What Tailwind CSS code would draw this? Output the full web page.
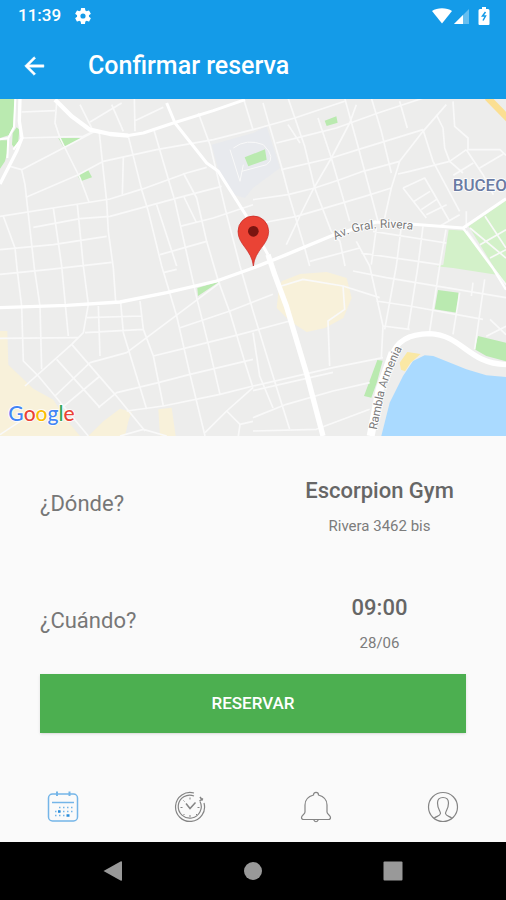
<!DOCTYPE html>
<html lang="es">
<head>
    <meta charset="UTF-8">
    <meta name="viewport" content="width=device-width, initial-scale=1.0">
    <title>Confirmar reserva</title>
    <script src="https://cdn.jsdelivr.net/npm/@tailwindcss/browser@4"></script>
</head>
<body class="min-h-screen flex flex-col bg-[#fafafa] font-[Roboto,sans-serif] text-[#666666]">

    <!-- Status bar + app bar -->
    <header class="bg-[#149be8] text-white">
        <div class="h-8 pl-[18px] pr-4 flex items-center justify-between">
            <div class="flex items-center gap-3">
                <span class="text-[17px] font-medium">11:39</span>
                <svg class="size-5" viewBox="0 0 24 24" fill="currentColor">
                    <path d="M19.14 12.94c.04-.3.06-.61.06-.94s-.02-.64-.07-.94l2.03-1.58a.49.49 0 0 0 .12-.61l-1.92-3.32a.49.49 0 0 0-.59-.22l-2.39.96a7 7 0 0 0-1.62-.94l-.36-2.54a.48.48 0 0 0-.48-.41h-3.84a.48.48 0 0 0-.47.41l-.36 2.54a7.3 7.3 0 0 0-1.62.94l-2.39-.96a.48.48 0 0 0-.59.22L2.74 8.87a.47.47 0 0 0 .12.61l2.03 1.58a6 6 0 0 0 0 1.88l-2.03 1.58a.49.49 0 0 0-.12.61l1.92 3.32c.12.22.37.29.59.22l2.39-.96c.5.38 1.03.7 1.62.94l.36 2.54c.05.24.24.41.48.41h3.84c.24 0 .44-.17.47-.41l.36-2.54a7 7 0 0 0 1.62-.94l2.39.96c.22.08.47 0 .59-.22l1.92-3.32a.47.47 0 0 0-.12-.61zM12 15.1a3.100 3.100 0 1 1 0-6.200 3.100 3.100 0 0 1 0 6.200"/>
                </svg>
            </div>
            <div class="flex items-center">
                <svg class="w-5 h-4" viewBox="0 0 20 16" fill="currentColor"><path d="M0 3C5-.8 15-.8 20 3L10 15.500z"/></svg>
                <svg class="ml-0.5 w-4 h-4" viewBox="0 0 16 16" fill="currentColor">
                    <path d="M0 16L15 1v15z" opacity=".35"/>
                    <path d="M0 16L9 7v9z"/>
                </svg>
                <svg class="ml-2 w-3 h-[18px]" viewBox="0 0 12 18">
                    <path d="M4 0h4v2h2q1.500 0 1.500 1.500V17q0 1-1 1H1.500q-1 0-1-1V3.500Q.5 2 2 2h2z" fill="currentColor"/>
                    <path d="M7.500 5L4.500 9H7.500L5 13.500" fill="none" stroke="#149be8" stroke-width="1.500"/>
                </svg>
            </div>
        </div>
        <div class="h-[67px] pl-5 flex items-center gap-10">
            <button type="button" aria-label="Volver">
                <svg class="size-7" viewBox="0 0 24 24" fill="currentColor" stroke="currentColor" stroke-width=".4"><path d="M20.500 11H7.830l5.590-5.590L12 4l-8 8 8 8 1.410-1.410L7.830 13H20.500z"/></svg>
            </button>
            <h1 class="text-[25px] font-medium">Confirmar reserva</h1>
        </div>
    </header>

    <!-- Map -->
    <svg class="block w-full h-[337px] bg-[#ededec]" viewBox="0 3 1518 1011" preserveAspectRatio="xMidYMid slice" role="img" aria-label="Mapa de Escorpion Gym">
        <!-- areas -->
        <path fill="#e8eaee" d="M635 140L759 105 800 85 840 210 759 270 735 300 700 290 655 215z"/>
        <g fill="#baeab0">
            <path d="M0 0H44L40 85 26 112 0 120zM0 127H21L25 150 15 190 0 212zM50 88L58 95 55 130 42 148 36 140 38 106z"/>
            <path d="M175 120L245 120 192 150zM232 232L264 215 276 238 242 250z"/>
            <path d="M734 178L795 154 800 185 745 205zM974 68L1009 55 1013 74 980 84z"/>
            <path d="M592 570L660 550 594 594zM108 916H140L125 934z"/>
            <path d="M1314 576L1376 584 1371 644 1304 634zM1434 714L1518 734V790L1459 774 1424 754zM1132 786L1148 788 1130 855 1114 899 1092 894z"/>
        </g>
        <g fill="#d3f1c9">
            <path d="M1346 395L1400 398 1490 530 1359 510 1310 505 1330 500z"/>
            <path d="M1406 385L1518 308V560L1480 505z"/>
        </g>
        <g fill="#f8f1da">
            <path d="M0 699H22L25 800 100 872 160 905 195 960 240 1014H0z"/>
            <path d="M265 1014L310 970 360 932 395 942 385 970 375 1014zM475 934L515 929 527 1014H480z"/>
            <path d="M845 550L900 528 980 522 1040 540 1055 600 1030 660 975 690 920 702 870 670 830 630 835 585z"/>
        </g>
        <!-- minor streets -->
        <g fill="none" stroke="#f9f9f9" stroke-width="5" stroke-linejoin="round">
            <path d="M65 42L165 38M65 120L250 115 290 95M170 15L165 75 180 120 240 240 268 315M30 205L65 215 75 260 85 350 103 510 120 624 125 814M65 215L180 155 285 100M240 20L280 100M270 72L365 15M335 20L370 100M403 0L405 100M405 68L490 28"/>
            <path d="M78 298L235 230 310 190 470 155 640 125 759 95 884 60 1034 10M298 105L308 200 320 310 325 400 340 510 347 610M385 115L425 275 445 340 485 504 530 654 570 829 615 1014M370 178L367 290M460 90L510 260 525 310 590 599 625 739 660 889"/>
            <path d="M0 355L235 318 330 303 430 272 560 225 620 208M10 355L45 450 52 520 65 624 70 789 115 834 265 1014M100 388L240 362 330 355 440 325 550 295 665 265M0 455L160 440 320 415M160 330L185 504 205 714M232 320L250 504 265 619 250 704 215 739 75 864M0 529L150 514 335 493M470 320L530 504"/>
            <path d="M550 225L590 300 620 430 655 549 690 644 735 794 759 869M552 297L590 375M540 385L640 360 759 320M480 470L620 430M595 45L630 140 680 350 720 504 759 639 819 834 869 994M730 0L759 95"/>
            <path d="M789 15L809 85 844 205 869 300 914 450 929 504M864 0L914 145 944 270 994 400 1020 430 1035 504M864 80L900 135M954 60L994 180 1029 300 1049 370M1034 0L1074 145 1109 275 1134 370M1114 0L1144 100 1174 225M1199 10L1222 90"/>
            <path d="M829 135L909 115 1009 90 1134 45 1270 0M844 215L994 180 1074 155 1269 95M759 305L864 290 944 270 1019 245 1089 220 1199 190M759 380L889 355 959 335 1094 295 1174 270M1069 20L1049 75 994 180 939 275 904 345 859 440M1339 20L1269 100 1199 190 1174 270 1154 360"/>
            <path d="M1309 50L1329 90 1334 150 1349 190M1359 10L1364 85 1404 120V155H1500L1518 172M1194 228L1229 220 1349 190 1399 155M1269 95L1299 190 1379 340M1349 190L1389 225M1399 155L1449 230 1480 290M1360 232L1420 195M1439 210L1510 168M1209 270L1274 240 1309 300 1349 370M1209 270L1279 360M1239 312L1290 280M1264 335L1309 305M1279 350L1340 320M1319 385L1379 350M1399 390V340"/>
            <path d="M929 490L1079 450M1069 430L1109 504 1149 684 1144 779M1129 390L1114 500M1204 385L1189 504 1154 694M1269 385L1254 504 1224 694M1119 400L1339 435M1084 465L1319 500M1338 395L1319 504 1289 699M1379 584L1359 709M1454 544L1424 754M1059 519L1159 539 1518 599M1129 609L1229 624 1449 664M1149 684L1229 694M1419 554L1414 594M1459 715L1518 685M1470 664L1518 710"/>
            <path d="M1410 390L1518 480M1440 440L1518 395M1470 480L1518 455M1455 355L1518 450M1400 398L1480 510 1518 560"/>
            <path d="M295 624L300 774M362 614L370 704 440 934M420 609L430 694 460 774 490 924M260 659L425 654M255 704L430 694M0 721L235 719M215 739L345 889 435 999M270 794L380 764 600 599 660 554M270 794L165 894M300 834L180 934M170 784L300 929M295 929L350 884 475 854 570 829 759 784M380 939L490 924 660 889 759 864M460 774L550 752 720 709 869 669M540 689L690 639 819 589M490 524L530 514M615 1004L680 939 759 869M680 939L720 979 715 1014M720 979L759 970M360 1014L430 994 500 1014M0 1010L60 970"/>
            <path d="M759 864L999 809 1149 779M759 878L999 823M759 959L859 919 999 879 1109 854M759 999L949 994 1109 934M759 704L779 834 819 930"/>
            <path d="M844 564L909 544 1029 564 1139 599M1029 564L1034 634 984 669 989 804"/>
            <path d="M690 155L720 250 730 200M700 150Q740 120 790 140Q830 180 800 200L725 220" stroke-width="3"/>
        </g>
        <!-- main roads -->
        <g fill="none" stroke="#ffffff" stroke-linejoin="round">
            <path stroke-width="10" d="M60 0L58 70 66 120 50 160 0 258"/>
            <path stroke-width="6" d="M46 0L42 88 25 120 0 124M25 120L22 180M66 120L40 155"/>
            <path stroke-width="13" d="M165 5L215 55 270 95 330 108 385 113"/>
            <path stroke-width="9" d="M380 113L430 105 520 75 640 38 735 5"/>
            <path stroke-width="9" d="M500 15L525 75 620 195 655 220 740 355 804 470"/>
            <path stroke-width="16" d="M804 470L824 530 859 624 919 824 969 1014"/>
            <path stroke-width="10" d="M0 629L200 622 360 612 500 584 650 549 759 510 859 470 999 412 1129 372"/>
            <path stroke-width="9" d="M1120 372L1229 378 1389 390 1518 302"/>
            <path stroke-width="7" d="M1389 390L1478 510 1518 575"/>
        </g>
        <!-- coast -->
        <path fill="#aadaff" d="M1144 1014L1169 914 1209 834 1239 789 1274 772 1300 774 1399 814 1459 832 1518 837V1014z"/>
        <path fill="#fae8a4" d="M1199 794L1222 762 1262 768 1232 794 1215 820 1203 815z"/>
        <path fill="none" stroke="#ffffff" stroke-width="24" d="M1112 1014L1139 874 1178 764"/>
        <path fill="none" stroke="#ffffff" stroke-width="16" d="M1175 775Q1195 708 1289 707C1390 712 1400 795 1518 800"/>
        <path stroke="#fbdf92" stroke-width="20" d="M1462 -2L1528 66"/>
        <!-- labels -->
        <path id="rivera" fill="none" d="M1006 426Q1100 375 1240 396"/>
        <path id="rambla" fill="none" d="M1130 996L1150 900Q1165 830 1210 745"/>
        <g font-family="Roboto, sans-serif" fill="#7a7a7a" stroke="#ffffff" stroke-width="5" paint-order="stroke">
            <text font-size="36"><textPath href="#rivera">Av. Gral. Rivera</textPath></text>
            <text font-size="35"><textPath href="#rambla">Rambla Armenia</textPath></text>
            <text x="1358" y="279" font-size="51" font-weight="500" fill="#6a7ba3">BUCEO</text>
        </g>
        <text x="25" y="970" font-family="Lato, sans-serif" font-size="63" font-weight="500" stroke="#ffffff" stroke-width="5" paint-order="stroke"><tspan fill="#4285f4">G</tspan><tspan fill="#ea4335">o</tspan><tspan fill="#fbbc05">o</tspan><tspan fill="#4285f4">g</tspan><tspan fill="#34a853">l</tspan><tspan fill="#ea4335">e</tspan></text>
        <!-- pin -->
        <path fill="#ea4335" stroke="#c5221f" stroke-width="2" d="M760 504C755 455 714 440 714 400A46 46 0 0 1 806 400C806 440 765 455 760 504z"/>
        <circle cx="760" cy="400" r="16" fill="#7a1510"/>
    </svg>

    <!-- Booking details -->
    <main class="flex-1 flex flex-col">
        <dl>
            <div class="h-[117px] pt-10 grid grid-cols-2">
                <dt class="mt-3 pl-10 text-[22px] leading-8 text-[#777777]">¿Dónde?</dt>
                <dd class="text-center">
                    <p class="text-[22px] leading-[30px] font-medium">Escorpion Gym</p>
                    <p class="mt-2 text-[15px] leading-6 text-[#7c7c7c]">Rivera 3462 bis</p>
                </dd>
            </div>
            <div class="h-[117px] pt-10 grid grid-cols-2">
                <dt class="mt-3 pl-10 text-[22px] leading-8 text-[#777777]">¿Cuándo?</dt>
                <dd class="text-center">
                    <p class="text-[22px] leading-[30px] font-medium">09:00</p>
                    <p class="mt-2 text-[15px] leading-6 text-[#7c7c7c]">28/06</p>
                </dd>
            </div>
        </dl>
        <button type="button" class="mt-1 mx-10 h-[59px] bg-[#4caf50] text-white text-[17px] font-medium shadow-sm">RESERVAR</button>
    </main>

    <!-- Tabs -->
    <nav class="h-[70px] grid grid-cols-4 place-items-center text-[#858585]">
        <a href="#reservas" aria-label="Reservas" class="text-[#74b5e8]">
            <svg class="size-8" viewBox="0 0 32 32" fill="none" stroke="currentColor">
                <rect x="1.500" y="3" width="29" height="27" rx="4" stroke-width="1.500"/>
                <path d="M5 11.500H27" stroke-width="1.500"/>
                <path d="M10 .5V5M22.500 .5V5" stroke-width="2"/>
                <path d="M12 16.500H26M8 20.500H26M8 24.500H19" stroke-width="1.500" stroke-dasharray="1.500 2.500"/>
                <path d="M11 20.500h2.500M19.500 24.500h3" stroke="#2b8ddb" stroke-width="2.500"/>
            </svg>
        </a>
        <a href="#historial" aria-label="Historial">
            <svg class="size-8" viewBox="0 0 32 32" fill="none" stroke="currentColor">
                <path d="M20 2A14.500 14.500 0 1 0 30 12" stroke-width="1.200"/>
                <path d="M20 5A11.500 11.500 0 1 0 26 10.500" stroke-width="1.200"/>
                <path d="M26 6L28.500 9.500M25.500 10L29 7.500" stroke-width="1.500"/>
                <path d="M12 12.500L16 17.500 21.500 11.500" stroke-width="1.500"/>
                <path d="M16 6.500V8.500M16 24V26M6.500 16.500H8.500M23.500 16.500H25.500M9.500 9.500L10.500 10.500M22 23L23 24M9.500 24L10.500 23"/>
            </svg>
        </a>
        <a href="#avisos" aria-label="Avisos">
            <svg class="size-8" viewBox="0 0 32 32" fill="none" stroke="currentColor" stroke-width="1.200">
                <path d="M13.500 4C13.500 .5 18.500 .5 18.500 4C24 5.500 27 9 27 14V21C27 23.500 30.500 24 30.500 26.500C30.500 28 29.500 28.500 28.500 28.500H3.500C2.500 28.500 1.500 28 1.500 26.500C1.500 24 5 23.500 5 21V14C5 9 8 5.500 13.500 4z"/>
                <path d="M13.500 28.500Q16 33 18.500 28.500"/>
            </svg>
        </a>
        <a href="#perfil" aria-label="Perfil">
            <svg class="size-8" viewBox="0 0 32 32" fill="none" stroke="currentColor" stroke-width="1.200">
                <circle cx="16" cy="16" r="14.500"/>
                <path d="M7 27.500C9 25 13 25.500 13.500 22.500C13.500 20 10.500 18 10.500 12C10.500 8 12.500 6.500 16 6.500S21.500 8 21.500 12C21.500 18 18.500 20 18.500 22.500C19 25.500 23 25 25 27.500"/>
            </svg>
        </a>
    </nav>

    <!-- System buttons -->
    <footer class="h-[58px] px-[43px] bg-black text-[#999999] grid grid-cols-3 place-items-center">
        <button type="button" aria-label="Atrás"><svg class="size-5" viewBox="0 0 20 20" fill="currentColor"><path d="M.5 10L17.500 .5Q19 0 19 1V19Q19 20 17.500 19.500z"/></svg></button>
        <button type="button" aria-label="Inicio"><svg class="size-5" viewBox="0 0 20 20" fill="currentColor"><circle cx="10" cy="10" r="9"/></svg></button>
        <button type="button" aria-label="Recientes"><svg class="size-5" viewBox="0 0 20 20" fill="currentColor"><rect x=".5" y=".5" width="19" height="19" rx="1"/></svg></button>
    </footer>

</body>
</html>
